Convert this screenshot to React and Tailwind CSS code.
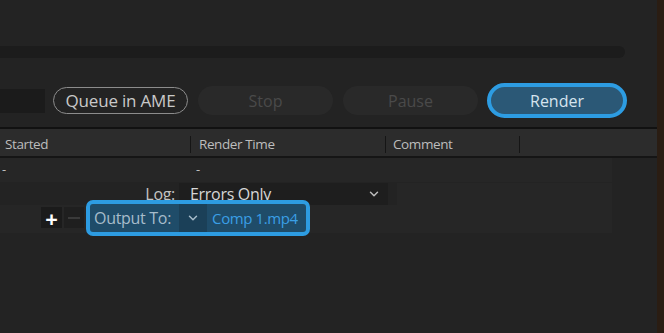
import { ChevronDown } from "lucide-react";

const font = { fontFamily: "'Open Sans', 'Liberation Sans', sans-serif" };

export default function App() {
	return (
		<div
			className="w-[664px] h-[333px] flex bg-[#232323] overflow-hidden"
			style={font}
		>
			<div className="w-[657px] flex flex-col">
				{/* ── progress + buttons ── */}
				<div className="h-[127px] flex flex-col">
					<div className="mt-[46px] h-[12px] w-[625px] rounded-r-full bg-[#1c1c1c]" />
					<div className="mt-[25px] h-[35px] flex items-center">
						<div className="w-[45px] h-[24px] bg-[#1b1b1b]" />
						<button className="ml-[8px] w-[135px] h-[27px] rounded-full border-[1.5px] border-[#8c8c8c] text-[#c9c9c9] text-[17px] tracking-[-0.2px] flex items-center justify-center">
							Queue in AME
						</button>
						<button className="ml-[10px] w-[135px] h-[29px] rounded-full bg-[#292929] text-[#4a4a4a] text-[16px] flex items-center justify-center">
							Stop
						</button>
						<button className="ml-[10px] w-[135px] h-[29px] rounded-full bg-[#292929] text-[#4a4a4a] text-[16px] flex items-center justify-center">
							Pause
						</button>
						<button className="ml-[9px] w-[140px] h-[35px] rounded-full border-[4px] border-[#2d9ce2] bg-[#2b5876] text-[#d6e4ee] text-[16px] flex items-center justify-center">
							Render
						</button>
					</div>
				</div>

				<div className="h-[2px] bg-[#111111]" />

				{/* ── header ── */}
				<div className="h-[27px] pt-[3px] bg-[#2c2c2c] flex items-center text-[13.5px] text-[#bdbdbd] tracking-[-0.4px]">
					<div className="w-[190px] pl-[5px]">Started</div>
					<div className="w-px h-[17px] bg-[#151515]" />
					<div className="w-[194px] pl-[8px]">Render Time</div>
					<div className="w-px h-[17px] bg-[#151515]" />
					<div className="w-[133px] pl-[7px]">Comment</div>
					<div className="w-px h-[17px] bg-[#151515]" />
				</div>

				<div className="h-[2px] bg-[#151515]" />

				{/* ── rows ── */}
				<div className="w-[612px] flex flex-col bg-[#262626]">
					<div className="h-[24px] flex items-center text-[13px] text-[#bdbdbd]">
						<div className="w-[196px] pl-[2px]">-</div>
						<div>-</div>
					</div>
					<div className="h-[23px] flex items-center bg-[#232323]">
						<div className="w-[175px] text-right text-[16px] tracking-[-0.3px] text-[#c4c4c4]">
							Log:
						</div>
						<div className="ml-[4px] w-[209px] h-[22px] bg-[#1e1e1e] flex items-center justify-between pl-[11px] pr-[7px] text-[16px] tracking-[-0.3px] text-[#d6d6d6]">
							<span>Errors Only</span>
							<ChevronDown size={14} strokeWidth={2.5} className="text-[#bdbdbd]" />
						</div>
						<div className="ml-[9px] flex-1 h-[22px] bg-[#262626]" />
					</div>
					<div className="h-[28px] flex items-start">
						<div className="ml-[41px] mt-[2px] w-[21px] h-[21px] bg-[#1b1b1b] flex items-center justify-center text-white text-[22px] font-bold leading-none">
							+
						</div>
						<div className="ml-[2px] mt-[2px] w-[20px] h-[21px] bg-[#1f1f1f] flex items-center justify-center">
							<div className="w-[12px] h-[2px] bg-[#3a3a3a]" />
						</div>
						<div className="relative -mt-[5px] ml-[2px] w-[224px] h-[36px] rounded-[7px] border-[4px] border-[#2d9ce2] bg-[#1f4c69] flex items-center text-[16px] tracking-[-0.3px] whitespace-nowrap">
							<span className="shrink-0 pl-[4px] text-[#a7bccb]">Output To:</span>
							<div className="shrink-0 ml-[8px] w-[28px] h-[28px] bg-[#1b4058] flex items-center justify-center">
								<ChevronDown size={14} strokeWidth={2.5} className="text-[#a7bccb]" />
							</div>
							<span className="shrink-0 ml-[5px] text-[15px] tracking-[-0.4px] text-[#3a9fe6]">Comp 1.mp4</span>
						</div>
					</div>
				</div>
			</div>
			<div className="flex-1 bg-[#2a1d13]" />
		</div>
	);
}
